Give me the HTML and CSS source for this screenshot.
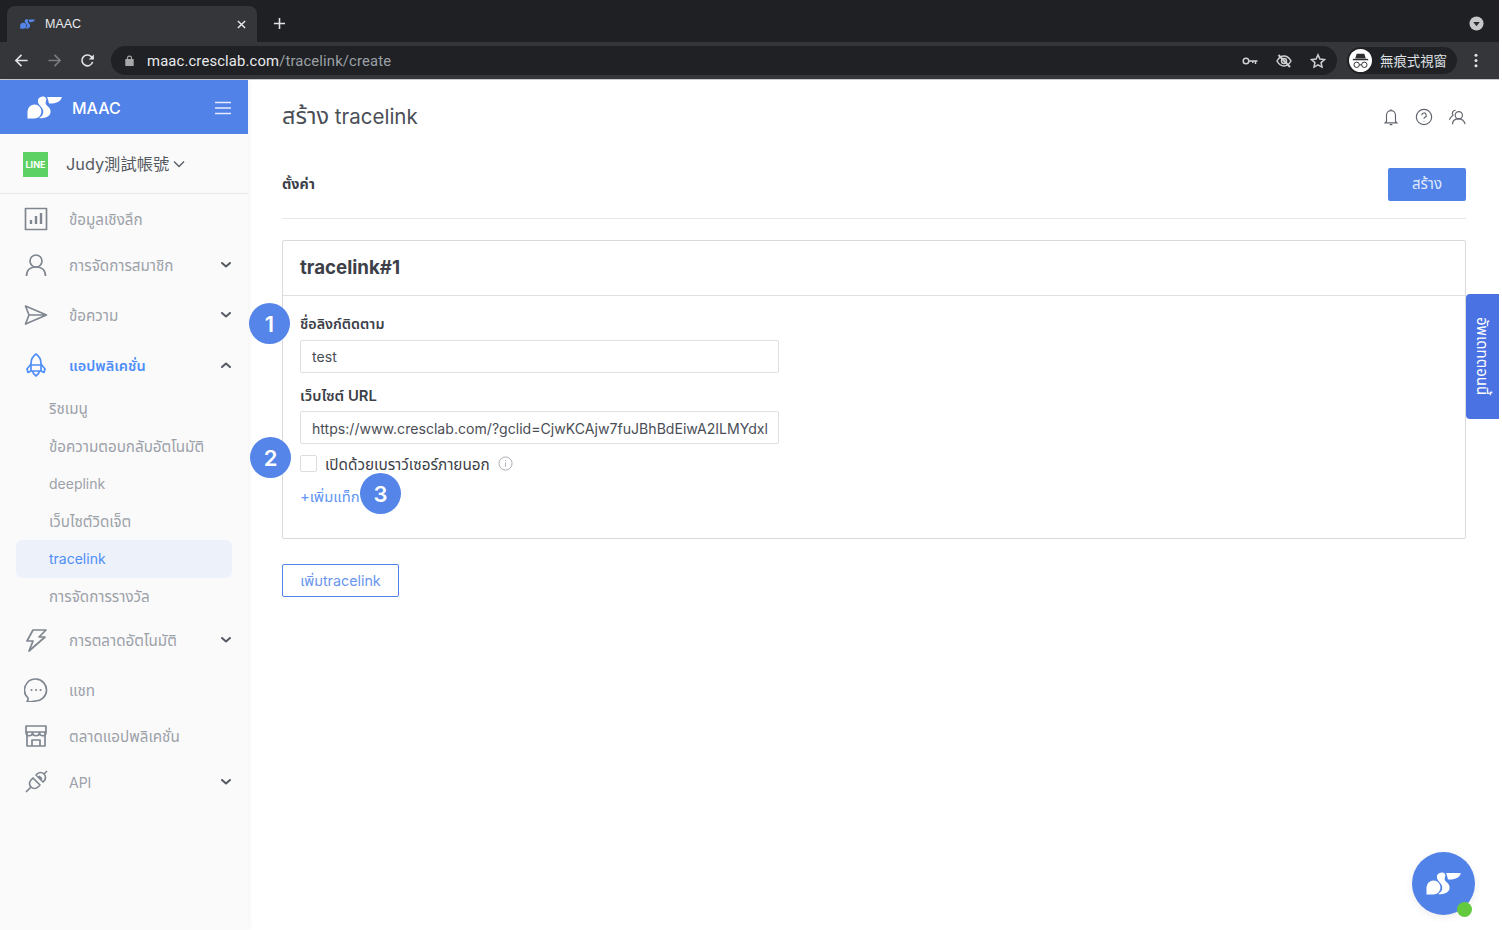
FILE: index.html
```html
<!DOCTYPE html>
<html lang="th">
<head>
<meta charset="utf-8">
<title>MAAC</title>
<link rel="stylesheet" href="styles.css">
</head>
<body>
<svg class="defs" width="0" height="0" aria-hidden="true">
  <symbol id="logo" viewBox="0 0 35 23">
    <path d="M0.5 22.500V15A7 7 0 1 1 7.500 22.500Z"/>
    <path d="M11 3.500C12 1 15 0 17 .5C19 1 20 3 19 5C18 7.500 19 9 21 10.500C24 13 24.500 17 22 19.500C19.500 22 15.500 22.500 12 22C15 20.500 17 17.500 16 14C15 11 12.500 9.500 11.500 7.500C11 6.500 10.800 5 11 3.500Z"/>
    <path d="M20 1H34.800C34 5.500 29 8 22 7.500C21.500 5.500 21 3 20 1Z"/>
  </symbol>
  <symbol id="chev" viewBox="0 0 10 6"><path d="M1 1l4 3.500L9 1" fill="none" stroke="currentColor" stroke-width="2" stroke-linecap="round" stroke-linejoin="round"/></symbol>
</svg>

<header class="chrome">
  <div class="tabstrip">
    <div class="tab">
      <svg class="favicon"><use href="#logo"/></svg>
      <span class="tab-title">MAAC</span>
      <svg class="tab-close" viewBox="0 0 10 10"><path d="M1 1l8 8M9 1l-8 8"/></svg>
    </div>
    <svg class="new-tab" viewBox="0 0 14 14"><path d="M7 1v12M1 7h12"/></svg>
    <span class="strip-spacer"></span>
    <span class="tab-menu"><svg viewBox="0 0 16 16"><circle cx="8" cy="8" r="7.500" fill="#c6c7c9"/><path d="M4.500 6.500h7L8 11z" fill="#2a2b2e"/></svg></span>
  </div>
  <div class="toolbar">
    <svg class="tb-icon" viewBox="0 0 16 16"><path d="M14.500 8H2M8 2L2 8l6 6"/></svg>
    <svg class="tb-icon dim" viewBox="0 0 16 16"><path d="M1.500 8H14M8 2l6 6-6 6"/></svg>
    <svg class="tb-icon" viewBox="0 0 16 16"><path d="M13.500 9.500A5.800 5.800 0 1 1 12 3.800L14 6"/><path class="fill" d="M14.800 1.500V7H9.300z"/></svg>
    <div class="omnibox">
      <svg class="lock" viewBox="0 0 10 12"><path d="M1 5h8v6.500H1zM2.800 5V3.300a2.200 2.200 0 0 1 4.400 0V5" fill="none" stroke="#a6a7a9" stroke-width="1.300"/><rect x="1" y="5" width="8" height="6.500" fill="#a6a7a9"/></svg>
      <span class="url"><span class="host">maac.cresclab.com</span><span class="path">/tracelink/create</span></span>
      <span class="strip-spacer"></span>
      <svg class="omni-icon" viewBox="0 0 16 10"><circle cx="4" cy="5" r="2.800"/><path d="M7 5h8.500M13.500 5v3M10.800 5v2"/></svg>
      <svg class="omni-icon" viewBox="0 0 16 16"><path d="M1 8c2-3.500 4.500-5 7-5s5 1.500 7 5c-2 3.500-4.500 5-7 5s-5-1.500-7-5z"/><circle cx="8" cy="8" r="2.500"/><path d="M2.500 2L14 14" stroke-width="2"/></svg>
      <svg class="omni-icon" viewBox="0 0 16 16"><path d="M8 1.800l1.900 4.200 4.600.5-3.400 3.100.9 4.500L8 11.800l-4 2.300.9-4.500-3.400-3.100 4.600-.5z"/></svg>
    </div>
    <div class="profile">
      <span class="incog"><svg viewBox="0 0 24 24"><path d="M8 5h8l1.500 5h-11z" fill="#2c2d30"/><path d="M4 11h16" stroke="#2c2d30" stroke-width="1.500"/><circle cx="8" cy="16.500" r="2.800" fill="none" stroke="#2c2d30" stroke-width="1"/><circle cx="16" cy="16.500" r="2.800" fill="none" stroke="#2c2d30" stroke-width="1"/><path d="M10.800 16.500h2.400" stroke="#2c2d30" stroke-width="1"/></svg></span>
      <span class="profile-name">無痕式視窗</span>
    </div>
    <svg class="kebab" viewBox="0 0 4 16"><circle cx="2" cy="2.500" r="1.600"/><circle cx="2" cy="8" r="1.600"/><circle cx="2" cy="13.500" r="1.600"/></svg>
  </div>
</header>

<div class="app">
  <aside class="sidebar">
    <div class="brand">
      <svg class="brand-logo"><use href="#logo"/></svg>
      <span class="brand-name">MAAC</span>
      <svg class="burger" viewBox="0 0 16 14"><path d="M0 1.500h16M0 7h16M0 12.500h16"/></svg>
    </div>
    <div class="account">
      <span class="line-badge">LINE</span>
      <span class="account-name">Judy測試帳號</span>
      <svg class="account-chev" viewBox="0 0 12 8"><path d="M1 1.500l5 5 5-5"/></svg>
    </div>
    <nav class="nav">
      <a class="nav-item">
        <svg class="nav-icon" viewBox="0 0 24 24"><rect x="1.500" y="1.500" width="21" height="21"/><path d="M7 17v-4M12 17V9M17 17V6" stroke-width="2.400"/></svg>
        <span class="nav-label th">ข้อมูลเชิงลึก</span>
      </a>
      <a class="nav-item">
        <svg class="nav-icon" viewBox="0 0 24 24"><circle cx="12" cy="8" r="6"/><path d="M2.500 23c0-6 4-9 9.500-9s9.500 3 9.500 9"/></svg>
        <span class="nav-label th">การจัดการสมาชิก</span>
        <svg class="nav-chev"><use href="#chev"/></svg>
      </a>
      <a class="nav-item spaced">
        <svg class="nav-icon" viewBox="0 0 24 24"><path d="M1.500 3l21 9-21 9 3.500-9zM5 12h17"/></svg>
        <span class="nav-label th">ข้อความ</span>
        <svg class="nav-chev"><use href="#chev"/></svg>
      </a>
      <a class="nav-item spaced open">
        <svg class="nav-icon" viewBox="0 0 24 24"><path d="M12 1c3.500 2.500 5 6 5 9.500V18H7v-7.500C7 7 8.500 3.500 12 1z"/><path d="M7 11l-4 5 1 3.500 3-1.500M17 11l4 5-1 3.500-3-1.500M7 12h10M8.500 18c.5 2.500 2 4 3.500 5 1.500-1 3-2.500 3.500-5"/></svg>
        <span class="nav-label">แอปพลิเคชั่น</span>
        <svg class="nav-chev up"><use href="#chev"/></svg>
      </a>
      <ul class="subnav">
        <li class="sub-item th">ริชเมนู</li>
        <li class="sub-item th">ข้อความตอบกลับอัตโนมัติ</li>
        <li class="sub-item">deeplink</li>
        <li class="sub-item th">เว็บไซต์วิดเจ็ต</li>
        <li class="sub-item active">tracelink</li>
        <li class="sub-item th">การจัดการรางวัล</li>
      </ul>
      <a class="nav-item">
        <svg class="nav-icon" viewBox="0 0 24 24"><path d="M9 2h13l-7 7h6L5 23l4-10H3z"/></svg>
        <span class="nav-label th">การตลาดอัตโนมัติ</span>
        <svg class="nav-chev"><use href="#chev"/></svg>
      </a>
      <a class="nav-item spaced">
        <svg class="nav-icon" viewBox="0 0 24 24"><path d="M12 1a11 11 0 1 1-1 22c-3 1-6 1-8 .500 1-1 1.300-2 1-3.500A11 11 0 0 1 12 1z"/><path d="M7.500 12h.1M12 12h.1M16.500 12h.1" stroke-width="2" stroke-linecap="round"/></svg>
        <span class="nav-label th">แชท</span>
      </a>
      <a class="nav-item">
        <svg class="nav-icon" viewBox="0 0 24 24"><path d="M2 2h20v6H2zM3 8v14h18V8M2 8c0 5 6.500 5 6.500 0 0 5 7 5 7 0 0 5 6.500 5 6.500 0M8 22v-6h8v6"/></svg>
        <span class="nav-label th">ตลาดแอปพลิเคชั่น</span>
      </a>
      <a class="nav-item">
        <svg class="nav-icon" viewBox="0 0 24 24"><path d="M9 8l7 7-2 2c-2 2-5 2-7 0s-2-5 0-7zM7 17l-5 5M15 6l3 3M12 5l7 7 1-1c2-2 2-5 0-7s-5-2-7 0zM20 4l3-3"/></svg>
        <span class="nav-label">API</span>
        <svg class="nav-chev"><use href="#chev"/></svg>
      </a>
    </nav>
  </aside>

  <main class="main">
    <div class="title-row">
      <h1 class="page-title"><span class="title-th">สร้าง</span> tracelink</h1>
      <div class="top-icons">
        <svg class="top-icon" viewBox="0 0 20 20"><path d="M10 1.500v1.500M5 15V8a5 5 0 0 1 10 0v7l1.500 1.500h-13zM8.500 18.500h3"/></svg>
        <svg class="top-icon" viewBox="0 0 20 20"><circle cx="10" cy="10" r="8.500"/><path d="M7.500 8a2.500 2.500 0 1 1 3.500 2.300c-.7.400-1 .9-1 1.700M10 14.500v.5"/></svg>
        <svg class="top-icon" viewBox="0 0 20 20"><circle cx="12" cy="8" r="4"/><path d="M5 18c0-4 3-6 7-6s6 2 7 6M8.500 2.500a3.500 3.500 0 0 0-3 5.500c-2 1-3 3-4 5"/></svg>
      </div>
    </div>
    <div class="settings-row">
      <h2 class="settings-title">ตั้งค่า</h2>
      <button class="primary-btn">สร้าง</button>
    </div>
    <section class="card">
      <h3 class="card-title">tracelink#1</h3>
      <div class="card-body">
        <label class="field-label">ชื่อลิงก์ติดตาม</label>
        <div class="field">test</div>
        <label class="field-label second">เว็บไซต์ URL</label>
        <div class="field url-field">https://www.cresclab.com/?gclid=CjwKCAjw7fuJBhBdEiwA2ILMYdxl</div>
        <div class="check-row">
          <span class="checkbox"></span>
          <span class="check-label">เปิดด้วยเบราว์เซอร์ภายนอก</span>
          <svg class="info" viewBox="0 0 16 16"><circle cx="8" cy="8" r="7"/><path d="M8 7v4.500M8 4.200v1.200"/></svg>
        </div>
        <a class="add-tag">+เพิ่มแท็ก</a>
      </div>
    </section>
    <button class="outline-btn">เพิ่มtracelink</button>

    <span class="marker m1">1</span>
    <span class="marker m2">2</span>
    <span class="marker m3">3</span>
    <span class="update-tab">อัพเดทตอนนี้</span>
    <span class="fab"><svg class="fab-logo"><use href="#logo"/></svg><span class="fab-dot"></span></span>
  </main>
</div>
</body>
</html>
```

FILE: styles.css
```css
* { box-sizing: border-box; }
html, body { margin: 0; padding: 0; height: 100%; overflow: hidden; background: #fff; }
body { font-family: "Inter", "Noto Sans Thai", "Noto Sans", "Noto Sans CJK TC", sans-serif; color: #3c4048; width: 1499px; }
.defs { position: absolute; }
h1, h2, h3 { margin: 0; }

.chrome { height: 80px; display: flex; flex-direction: column; border-bottom: 1px solid #c9cacc; }
.tabstrip { height: 42px; background: #1f2023; display: flex; align-items: flex-end; padding-left: 7px; }
.tab { width: 250px; height: 36px; background: #35363a; border-radius: 8px 8px 0 0; display: flex; align-items: center; padding: 0 11px 0 13px; }
.favicon { width: 15px; height: 10px; fill: #5585e8; }
.tab-title { margin-left: 10px; font-size: 12.500px; color: #e8eaed; flex: 1; font-family: "Liberation Sans", sans-serif; }
.tab-close { width: 9px; height: 9px; fill: none; stroke: #e8eaed; stroke-width: 1.600; }
.new-tab { width: 13px; height: 13px; margin: 0 0 12px 16px; fill: none; stroke: #dfe1e5; stroke-width: 1.700; }
.strip-spacer { flex: 1; }
.tab-menu { width: 15px; height: 15px; margin: 0 15px 11px 0; display: flex; }
.tab-menu svg { width: 15px; height: 15px; }

.toolbar { height: 37px; background: #35363a; display: flex; align-items: center; padding-left: 14px; }
.tb-icon { width: 15px; height: 15px; margin-right: 18px; fill: none; stroke: #e3e4e6; stroke-width: 1.700; flex: none; }
.tb-icon.dim { stroke: #7c7d80; }
.tb-icon .fill { fill: #e3e4e6; stroke: none; }
.omnibox { width: 1226px; height: 29px; margin-left: -2px; background: #202124; border-radius: 15px; display: flex; align-items: center; padding: 0 11px 0 14px; flex: none; }
.lock { width: 9px; height: 11px; flex: none; }
.url { margin-left: 13px; font-size: 14.800px; font-family: "Roboto", "Liberation Sans", sans-serif; letter-spacing: .15px; }
.host { color: #e8eaed; }
.path { color: #9aa0a6; }
.omni-icon { width: 16px; height: 16px; margin-left: 18px; fill: none; stroke: #cfd0d2; stroke-width: 1.500; flex: none; }
.profile { width: 110px; height: 27px; margin-left: 10px; background: #202124; border-radius: 14px; display: flex; align-items: center; padding-left: 2px; flex: none; }
.incog { width: 23px; height: 23px; background: #fff; border-radius: 50%; display: flex; }
.incog svg { width: 23px; height: 23px; }
.profile-name { margin-left: 8px; font-size: 13.400px; line-height: 16px; color: #dfe1e5; font-family: "Noto Sans CJK TC", sans-serif; padding-bottom: 2px; }
.kebab { width: 4px; height: 15px; margin-left: 17px; fill: #e3e4e6; flex: none; }

.app { display: flex; height: 850px; }
.sidebar { width: 248px; flex: none; background: #fafafa; box-shadow: 1px 0 5px rgba(0,0,0,.06); }
.brand { height: 54px; background: #5082e8; display: flex; align-items: center; padding: 1px 17px 0 27px; }
.brand-logo { width: 35px; height: 23px; fill: #fff; }
.brand-name { margin-left: 10px; font-size: 16px; font-weight: 500; color: #fff; flex: 1; }
.burger { width: 16px; height: 14px; fill: none; stroke: #e6edfc; stroke-width: 1.600; }
.account { height: 60px; border-bottom: 1px solid #e6e7e9; display: flex; align-items: center; padding: 2px 0 0 23px; }
.line-badge { width: 25px; height: 25px; background: #5ed164; color: #fff; font-size: 9px; font-weight: 700; display: flex; align-items: center; justify-content: center; }
.account-name { margin-left: 18px; font-size: 16.300px; line-height: 20px; color: #555a62; padding-bottom: 1px; }
.account-chev { width: 12px; height: 8px; margin: 0 0 2px 4px; fill: none; stroke: #555a62; stroke-width: 1.300; }

.nav { padding-top: 2px; }
.nav-item { height: 46px; display: flex; align-items: center; padding: 0 17px 0 24px; color: #9ca1a9; font-size: 14px; }
.nav-item.spaced { margin-top: 4px; }
.nav-icon { width: 24px; height: 24px; flex: none; fill: none; stroke: #7f8690; stroke-width: 1.700; stroke-linejoin: round; }
.nav-label { margin-left: 21px; flex: 1; }
.nav-label.th { font-size: 15.200px; padding-top: 2px; }
.nav-chev { width: 10px; height: 6px; color: #555a62; }
.nav-chev.up { transform: rotate(180deg); }
.nav-item.open { color: #4f8ef7; font-weight: 600; font-size: 14.500px; }
.nav-item.open .nav-label { padding-top: 3px; }
.nav-item.open .nav-icon { stroke: #4f8ef7; }

.subnav { list-style: none; margin: 2px 0 2px; padding: 0 16px; }
.sub-item { height: 37.500px; display: flex; align-items: center; padding-left: 33px; font-size: 14px; color: #9ca1a9; border-radius: 6px; }
.sub-item.th { font-size: 15.200px; padding-top: 2px; }
.sub-item.active { background: #edf1fa; color: #4f8ef7; }

.main { flex: 1; padding: 0 33px 0 34px; position: relative; }
.title-row { height: 72px; display: flex; align-items: center; justify-content: space-between; padding-top: 1px; }
.page-title { font-size: 20.500px; font-weight: 400; color: #4a4e56; }
.title-th { font-size: 23.500px; }
.top-icons { display: flex; gap: 15px; margin-right: 0; }
.top-icon { width: 18px; height: 18px; fill: none; stroke: #60656d; stroke-width: 1.300; }
.settings-row { height: 67px; display: flex; align-items: center; justify-content: space-between; border-bottom: 1px solid #e6e7e9; padding-bottom: 1px; }
.settings-title { font-size: 14.300px; font-weight: 700; color: #3c4048; }
.primary-btn { width: 78px; height: 33px; background: #5082e8; border: 0; border-radius: 2px; color: #dfe8fb; font: inherit; font-size: 15px; }

.card { margin-top: 21px; height: 299px; border: 1px solid #d9dadc; border-radius: 2px; }
.card-title { height: 55px; padding-left: 17px; border-bottom: 1px solid #dedfe1; font-size: 18.700px; font-weight: 700; line-height: 53px; color: #3c4048; }
.card-body { padding: 18px 17px 0; }
.field-label { display: block; font-size: 14.300px; font-weight: 600; line-height: 20px; color: #3c4048; height: 26px; }
.field-label.second { margin-top: 13px; height: 25px; font-size: 14.800px; }
.field { width: 479px; height: 33px; border: 1px solid #dedfe1; border-radius: 2px; padding: 0 11px; font-size: 14.100px; line-height: 32px; color: #4a4e56; white-space: nowrap; overflow: hidden; }
.url-field { line-height: 33px; }
.check-row { display: flex; align-items: center; margin-top: 11px; height: 17px; }
.checkbox { width: 17px; height: 17px; border: 1px solid #dcdde0; border-radius: 2px; }
.check-label { margin-left: 8px; font-size: 15.300px; line-height: 19px; padding-top: 1px; color: #3c4048; }
.info { width: 15px; height: 15px; margin-left: 8px; fill: none; stroke: #a8abb0; stroke-width: 1; }
.add-tag { display: block; margin-top: 15px; font-size: 14.800px; line-height: 20px; color: #5f95f5; }
.outline-btn { display: block; margin-top: 25px; width: 117px; height: 33px; background: #fff; border: 1px solid #5082e8; border-radius: 2px; color: #6a96ee; font: inherit; font-size: 14.300px; line-height: 31px; padding: 0; }

.marker { position: absolute; width: 41px; height: 41px; border-radius: 50%; background: #5585e8; color: #fff; font-size: 22px; font-weight: 600; display: flex; align-items: center; justify-content: center; }
.m1 { left: 1px; top: 223px; }
.m2 { left: 2px; top: 357px; }
.m3 { left: 112px; top: 393px; }
.update-tab { position: absolute; left: 1218px; top: 214px; width: 33px; height: 125px; background: #4a72e3; border-radius: 4px 0 0 4px; color: #fff; font-size: 15px; writing-mode: vertical-rl; display: flex; align-items: center; justify-content: center; }
.fab { position: absolute; left: 1164px; top: 772px; width: 63px; height: 63px; border-radius: 50%; background: #5082e8; box-shadow: 0 2px 8px rgba(0,0,0,.08); display: flex; align-items: center; justify-content: center; }
.fab-logo { width: 35px; height: 23px; fill: #fff; }
.fab-dot { position: absolute; left: 45px; top: 50px; width: 15px; height: 15px; border-radius: 50%; background: #63c93f; }
```
